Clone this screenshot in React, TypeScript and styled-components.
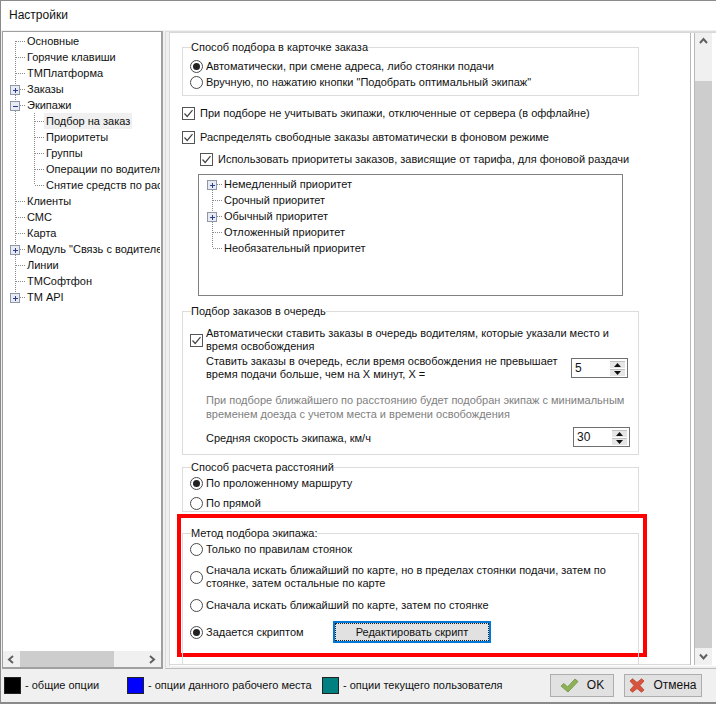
import React from "react";
import styled, { createGlobalStyle } from "styled-components";

const Global = createGlobalStyle`
  html, body { margin: 0; padding: 0; background: #f0f0f0; }
  * { box-sizing: border-box; }
`;

const Win = styled.div`
  width: 716px; height: 704px; display: flex; flex-direction: column; overflow: hidden;
  font: 11px/13px "Liberation Sans", Arial, sans-serif; color: #111;
  background: #f0f0f0; border-top: 1px solid #8a8a8a; border-left: 1px solid #8a8a8a; border-bottom: 2px solid #8a8a8a;
`;
const TitleBar = styled.div`
  height: 29px; flex: none; background: #fff; display: flex; align-items: center; padding: 0 0 1px 8px; font-size: 12px;
`;
const Body = styled.div`
  flex: none; height: 639px; display: flex; padding: 1px 0 0 1px;
`;
const TreePane = styled.div`
  width: 161px; flex: none; background: #fff; border: 1px solid #a0a0a0; border-right-width: 2px; border-bottom-width: 2px;
  display: flex; flex-direction: column; overflow: hidden;
`;
const TreeScroll = styled.div`
  flex: 1; padding: 1px 0 0 0; overflow: hidden;
`;
const HBar = styled.div`
  height: 16px; flex: none; background: #f0f0f0; display: flex; align-items: center;
`;
const HThumb = styled.div`
  width: 94px; height: 16px; background: #cdcdcd;
`;
const ArrowCell = styled.div`
  width: 17px; height: 16px; flex: none; display: flex; align-items: center; justify-content: center;
`;
const HTrack = styled.div`
  flex: 1; display: flex;
`;
const Row = styled.div`
  height: 16px; display: flex; white-space: nowrap; align-items: center;
`;
const RowLabel = styled.span<{ $selected?: boolean }>`
  display: block; height: 16px; line-height: 16px; padding: 0 2px; background: ${p => (p.$selected ? "#f0f0f0" : "transparent")};
  margin-left: -2px;
`;

const Dots = ({ x1, y1, x2, y2 }: { x1: number; y1: number; x2: number; y2: number }) => (
  <line x1={x1} y1={y1} x2={x2} y2={y2} stroke="#8a8a8a" strokeWidth="1" strokeDasharray="1 1" />
);

type Glyph = {
  kind: "leaf" | "plus" | "minus";
  level: number;
  first?: boolean;
  last?: boolean;
  cx?: number;
};

const TreeGlyph = ({ kind, level, first, last, cx = 12 }: Glyph) => {
  const width = level === 1 ? 43 : cx + 12;
  const x = level === 1 ? 31 : cx;
  return (
    <svg width={width} height={16} style={{ flex: "none" }} shapeRendering="crispEdges">
      {level === 1 && <Dots x1={12.5} y1={0} x2={12.5} y2={16} />}
      <Dots x1={x + 0.5} y1={first ? 8 : 0} x2={x + 0.5} y2={last ? 8 : 16} />
      <Dots x1={x + 1} y1={8.5} x2={x + 11} y2={8.5} />
      {kind !== "leaf" && (
        <g>
          <rect x={x - 4.5} y={4.5} width={9} height={9} fill="#e8ebf2" stroke="#8d97a8" />
          <line x1={x - 2} y1={9} x2={x + 3} y2={9} stroke="#2a3f8f" />
          {kind === "plus" && <line x1={x + 0.5} y1={6.5} x2={x + 0.5} y2={11.5} stroke="#2a3f8f" />}
        </g>
      )}
    </svg>
  );
};

const Clip = styled.div`
  width: 157px; overflow: hidden;
`;

const Main = styled.div`
  flex: 1; margin-left: 2px; border: 1px solid #dcdcdc; border-right: none; background: #f0f0f0; display: flex; flex-direction: column;
  padding: 0; border-bottom: 1px solid #bdbdbd;
`;
const MainInner = styled.div`
  flex: none; height: 634px; margin-left: 3px; background: #fff; border-top: 1px solid #d8d8d8; border-left: 1px solid #d8d8d8; display: flex; align-items: flex-start; overflow: hidden;
`;
const Content = styled.div`
  width: 520px; height: 632px; flex: none; padding: 8px 0 0 0; overflow: hidden; display: flex; flex-direction: column; border-bottom: 1px solid #d8d8d8;
`;
const VLines = styled.div`
  width: 5px; height: 632px; flex: none; border-left: 1px solid #b8b8b8; border-right: 1px solid #b8b8b8;
`;
const VBar = styled.div`
  width: 17px; height: 632px; flex: none; background: #f0f0f0; display: flex; flex-direction: column;
`;
const VCell = styled.div`
  height: 17px; flex: none; display: flex; align-items: center; justify-content: center;
`;
const VGap = styled.div<{ $h: number }>`
  height: ${p => p.$h}px; flex: none;
`;
const VThumb = styled.div`
  flex: 1; background: #cdcdcd;
`;

const Group = styled.fieldset<{ $h: number; $mt?: number }>`
  margin: ${p => p.$mt ?? 0}px 0 0 12px; padding: 0 0 0 7px; width: 457px; height: ${p => p.$h}px; flex: none;
  border: 1px solid #dcdcdc; min-width: 0; display: block;
`;
const InnerGroup = styled(Group)`
  margin-left: 0; border-bottom: none;
`;
const Legend = styled.legend`
  padding: 0; margin-left: 1px; line-height: 13px; background: #fff; height: 13px;
`;
const Radio = styled.span<{ $on?: boolean }>`
  display: block; width: 13px; height: 13px; flex: none; border-radius: 50%; border: 1px solid #4a4a4a; background: #fff; position: relative;
  ${p => p.$on && `&::after { content: ""; position: absolute; left: 2px; top: 2px; width: 7px; height: 7px; border-radius: 50%; background: #222; }`}
`;
const Opt = styled.div<{ $mt?: number }>`
  display: flex; align-items: center; gap: 3px; margin-top: ${p => p.$mt ?? 0}px; min-height: 16px;
`;
const CheckRow = styled.div<{ $ml: number; $mt: number }>`
  display: flex; align-items: center; gap: 5px; margin: ${p => p.$mt}px 0 0 ${p => p.$ml}px; height: 16px; flex: none;
`;
const CheckBox = styled.span`
  display: flex; width: 13px; height: 13px; flex: none; border: 1px solid #555; background: #fff; align-items: center; justify-content: center;
`;
const Tick = () => (
  <svg width="11" height="11" viewBox="0 0 11 11"><path d="M1.5 5.5 L4.2 8.5 L9.5 2.2" fill="none" stroke="#444" strokeWidth="1.2" /></svg>
);
const PriorityBox = styled.div`
  margin: 7px 0 0 28px; width: 425px; height: 122px; flex: none; border: 1px solid #808080; padding: 1px 0 0 1px;
`;
const OptText = styled.div`
  white-space: nowrap;
`;
const Note = styled.div<{ $muted?: boolean; $mt?: number }>`
  width: 358px; flex: none; white-space: nowrap; margin-left: 16px; margin-top: ${p => p.$mt ?? 0}px;
  color: ${p => (p.$muted ? "#808080" : "#111")}; line-height: ${p => (p.$muted ? 14 : 13)}px;
`;
const SpinRow = styled.div<{ $mt: number }>`
  display: flex; align-items: flex-start; margin-top: ${p => p.$mt}px; gap: 7px;
`;
const Spin = styled.div<{ $ml: number; $mt: number }>`
  width: 57px; height: 20px; flex: none; border: 1px solid #707070; margin: ${p => p.$mt}px 0 0 ${p => p.$ml}px; display: flex; align-items: center; padding: 0 2px 0 3px; background: #fff; font-size: 12px;
`;
const SpinValue = styled.span`
  flex: 1;
`;
const SpinBtns = styled.div`
  width: 15px; display: flex; flex-direction: column; gap: 1px;
`;
const SpinBtn = styled.div`
  height: 7px; background: #e6e6e6; border-top: 1px solid #c0c0c0; display: flex; align-items: center; justify-content: center;
`;
const Tri = ({ up }: { up?: boolean }) => (
  <svg width="7" height="4" viewBox="0 0 7 4"><path d={up ? "M3.5 0 L7 4 L0 4 Z" : "M0 0 L7 0 L3.5 4 Z"} fill="#111" /></svg>
);
const RedFrame = styled.div`
  margin: 2px 0 0 7px; width: 470px; height: 143px; border: 4px solid #ff0000; flex: none; padding: 9px 0 0 1px;
`;
const ScriptLabel = styled.span`
  width: 124px; flex: none;
`;
const ScriptBtn = styled.div`
  width: 158px; height: 22px; border: 2px solid #0078d7; background: #e1e1e1; display: flex; align-items: center; justify-content: center;
  outline: 1px dotted #222; outline-offset: -3px;
`;

const Footer = styled.div`
  flex: 1; display: flex; align-items: center; padding: 0 13px 1px 3px;
`;
const Swatch = styled.span<{ $c: string }>`
  width: 17px; height: 17px; flex: none; background: ${p => p.$c}; border: 1px solid #222;
`;
const LegendText = styled.span<{ $w: number }>`
  width: ${p => p.$w}px; flex: none; padding-left: 4px; white-space: nowrap;
`;
const Btn = styled.div<{ $w: number; $ml: number }>`
  width: ${p => p.$w}px; margin-left: ${p => p.$ml}px; height: 23px; flex: none; background: #e1e1e1; border: 1px solid #adadad;
  display: flex; align-items: center; justify-content: center; gap: 8px; font-size: 12px;
`;

const Chevron = ({ d }: { d: "l" | "r" | "u" | "d" }) => {
  const path = { l: "M6 1 L2 4.5 L6 8", r: "M2 1 L6 4.5 L2 8", u: "M1 6 L4.5 2 L8 6", d: "M1 2.5 L4.5 6.5 L8 2.5" }[d];
  return <svg width="9" height="9" viewBox="0 0 9 9"><path d={path} fill="none" stroke="#606060" strokeWidth="2" /></svg>;
};

const tree: { t: string; kind: "leaf" | "plus" | "minus"; level: number; first?: boolean; last?: boolean; sel?: boolean }[] = [
  { t: "Основные", kind: "leaf", level: 0, first: true },
  { t: "Горячие клавиши", kind: "leaf", level: 0 },
  { t: "ТМПлатформа", kind: "leaf", level: 0 },
  { t: "Заказы", kind: "plus", level: 0 },
  { t: "Экипажи", kind: "minus", level: 0 },
  { t: "Подбор на заказ", kind: "leaf", level: 1, sel: true },
  { t: "Приоритеты", kind: "leaf", level: 1 },
  { t: "Группы", kind: "leaf", level: 1 },
  { t: "Операции по водителю", kind: "leaf", level: 1 },
  { t: "Снятие средств по расписанию", kind: "leaf", level: 1, last: true },
  { t: "Клиенты", kind: "leaf", level: 0 },
  { t: "СМС", kind: "leaf", level: 0 },
  { t: "Карта", kind: "leaf", level: 0 },
  { t: "Модуль \"Связь с водителем\"", kind: "plus", level: 0 },
  { t: "Линии", kind: "leaf", level: 0 },
  { t: "ТМСофтфон", kind: "leaf", level: 0 },
  { t: "ТМ API", kind: "plus", level: 0, last: true },
];

const priorities: { t: string; kind: "leaf" | "plus"; first?: boolean; last?: boolean }[] = [
  { t: "Немедленный приоритет", kind: "plus", first: true },
  { t: "Срочный приоритет", kind: "leaf" },
  { t: "Обычный приоритет", kind: "plus" },
  { t: "Отложенный приоритет", kind: "leaf" },
  { t: "Необязательный приоритет", kind: "leaf", last: true },
];

const OkIcon = () => (
  <svg width="19" height="15" viewBox="0 0 19 15">
    <path d="M1 8 L4 5.5 L7.5 9 L15 1 L18 3.5 L8 14 Z" fill="#8db255" stroke="#6b8f3f" strokeWidth="0.8" />
  </svg>
);
const CancelIcon = () => (
  <svg width="16" height="15" viewBox="0 0 16 15">
    <path d="M1 3 L3.5 0.8 L8 4.5 L12.5 0.8 L15 3 L11 7.5 L15 12 L12.5 14.2 L8 10.5 L3.5 14.2 L1 12 L5 7.5 Z" fill="#d9543f" stroke="#b5452f" strokeWidth="0.8" />
  </svg>
);

export default function App() {
  return (
    <Win>
      <Global />
      <TitleBar>Настройки</TitleBar>
      <Body>
        <TreePane>
          <TreeScroll>
            <Clip>
              {tree.map(r => (
                <Row key={r.t}>
                  <TreeGlyph kind={r.kind} level={r.level} first={r.first} last={r.last} />
                  <RowLabel $selected={r.sel}>{r.t}</RowLabel>
                </Row>
              ))}
            </Clip>
          </TreeScroll>
          <HBar>
            <ArrowCell><Chevron d="l" /></ArrowCell>
            <HTrack><HThumb /></HTrack>
            <ArrowCell><Chevron d="r" /></ArrowCell>
          </HBar>
        </TreePane>
        <Main>
          <MainInner>
            <Content>
              <Group $h={55}>
                <Legend>Способ подбора в карточке заказа</Legend>
                <Opt $mt={4}><Radio $on /><span>Автоматически, при смене адреса, либо стоянки подачи</span></Opt>
                <Opt><Radio /><span>Вручную, по нажатию кнопки "Подобрать оптимальный экипаж"</span></Opt>
              </Group>
              <CheckRow $ml={12} $mt={9}><CheckBox><Tick /></CheckBox><span>При подборе не учитывать экипажи, отключенные от сервера (в оффлайне)</span></CheckRow>
              <CheckRow $ml={12} $mt={8}><CheckBox><Tick /></CheckBox><span>Распределять свободные заказы автоматически в фоновом режиме</span></CheckRow>
              <CheckRow $ml={30} $mt={6}><CheckBox><Tick /></CheckBox><span>Использовать приоритеты заказов, зависящие от тарифа, для фоновой раздачи</span></CheckRow>
              <PriorityBox>
                {priorities.map(r => (
                  <Row key={r.t}>
                    <TreeGlyph kind={r.kind} level={0} first={r.first} last={r.last} cx={12} />
                    <RowLabel>{r.t}</RowLabel>
                  </Row>
                ))}
              </PriorityBox>
              <Group $h={150} $mt={9}>
                <Legend>Подбор заказов в очередь</Legend>
                <Opt $mt={9}><CheckBox><Tick /></CheckBox><OptText>Автоматически ставить заказы в очередь водителям, которые указали место и<br />время освобождения</OptText></Opt>
                <SpinRow $mt={2}>
                  <Note>Ставить заказы в очередь, если время освобождения не превышает<br />время подачи больше, чем на X минут, X =</Note>
                  <Spin $ml={0} $mt={3}><SpinValue>5</SpinValue><SpinBtns><SpinBtn><Tri up /></SpinBtn><SpinBtn><Tri /></SpinBtn></SpinBtns></Spin>
                </SpinRow>
                <Note $muted $mt={12}>При подборе ближайшего по расстоянию будет подобран экипаж с минимальным<br />временем доезда с учетом места и времени освобождения</Note>
                <SpinRow $mt={6}>
                  <Note $mt={5}>Средняя скорость экипажа, км/ч</Note>
                  <Spin $ml={2} $mt={0}><SpinValue>30</SpinValue><SpinBtns><SpinBtn><Tri up /></SpinBtn><SpinBtn><Tri /></SpinBtn></SpinBtns></Spin>
                </SpinRow>
              </Group>
              <Group $h={51} $mt={6}>
                <Legend>Способ расчета расстояний</Legend>
                <Opt $mt={1}><Radio $on /><span>По проложенному маршруту</span></Opt>
                <Opt $mt={4}><Radio /><span>По прямой</span></Opt>
              </Group>
              <RedFrame>
                <InnerGroup $h={140}>
                  <Legend>Метод подбора экипажа:</Legend>
                  <Opt $mt={1}><Radio /><span>Только по правилам стоянок</span></Opt>
                  <Opt $mt={7}><Radio /><OptText>Сначала искать ближайший по карте, но в пределах стоянки подачи, затем по<br />стоянке, затем остальные по карте</OptText></Opt>
                  <Opt $mt={7}><Radio /><span>Сначала искать ближайший по карте, затем по стоянке</span></Opt>
                  <Opt $mt={8}><Radio $on /><ScriptLabel>Задается скриптом</ScriptLabel><ScriptBtn>Редактировать скрипт</ScriptBtn></Opt>
                </InnerGroup>
              </RedFrame>
            </Content>
            <VLines />
            <VBar>
              <VCell><Chevron d="u" /></VCell>
              <VGap $h={31} />
              <VThumb />
              <VCell><Chevron d="d" /></VCell>
            </VBar>
          </MainInner>
        </Main>
      </Body>
      <Footer>
        <Swatch $c="#000" /><LegendText $w={106}>- общие опции</LegendText>
        <Swatch $c="#0000ff" /><LegendText $w={178}>- опции данного рабочего места</LegendText>
        <Swatch $c="#008080" /><LegendText $w={211}>- опции текущего пользователя</LegendText>
        <Btn $w={64} $ml={0}><OkIcon />OK</Btn>
        <Btn $w={78} $ml={10}><CancelIcon />Отмена</Btn>
      </Footer>
    </Win>
  );
}
